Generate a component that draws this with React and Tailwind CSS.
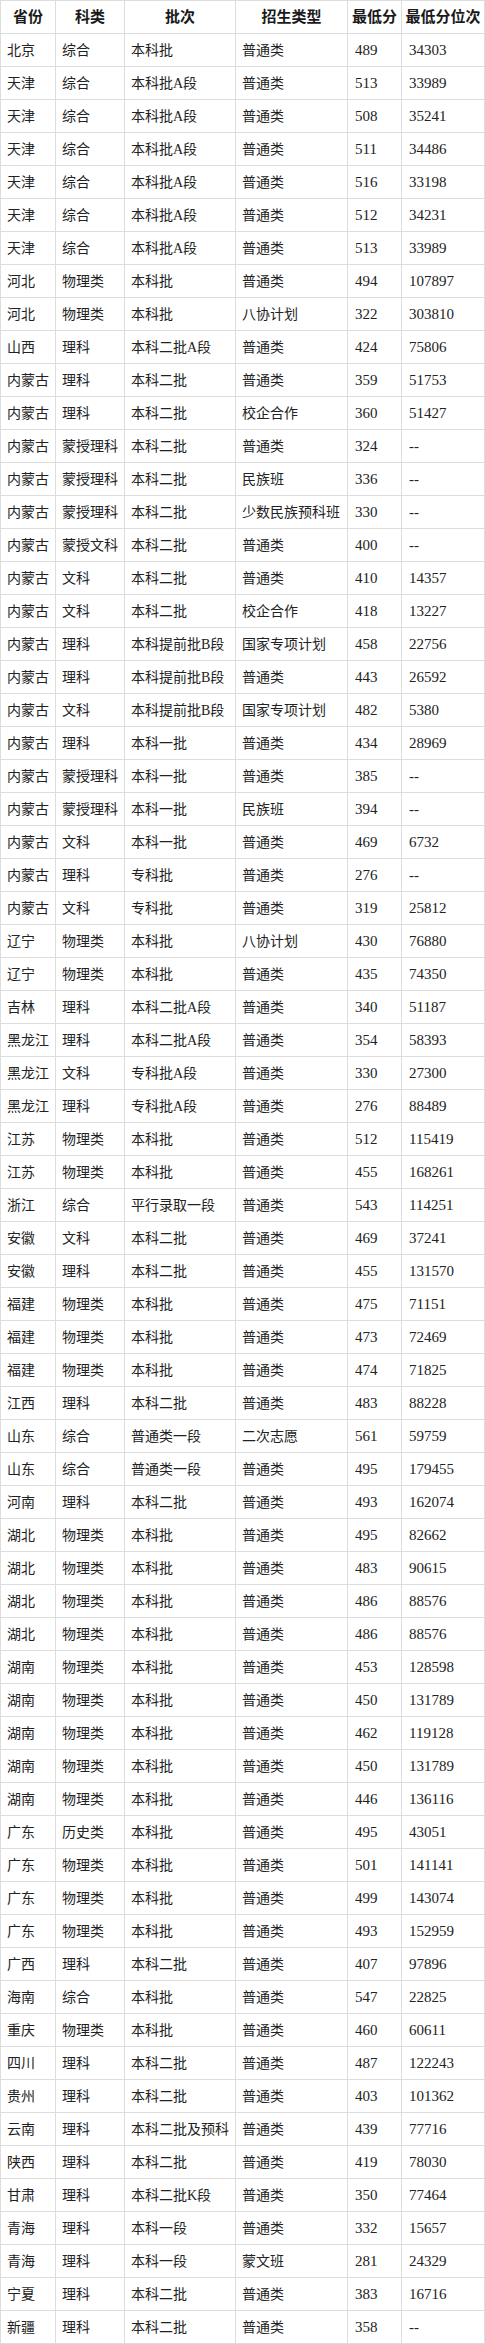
const headers = ["省份", "科类", "批次", "招生类型", "最低分", "最低分位次"];

const rows = [
  ["北京", "综合", "本科批", "普通类", "489", "34303"],
  ["天津", "综合", "本科批A段", "普通类", "513", "33989"],
  ["天津", "综合", "本科批A段", "普通类", "508", "35241"],
  ["天津", "综合", "本科批A段", "普通类", "511", "34486"],
  ["天津", "综合", "本科批A段", "普通类", "516", "33198"],
  ["天津", "综合", "本科批A段", "普通类", "512", "34231"],
  ["天津", "综合", "本科批A段", "普通类", "513", "33989"],
  ["河北", "物理类", "本科批", "普通类", "494", "107897"],
  ["河北", "物理类", "本科批", "八协计划", "322", "303810"],
  ["山西", "理科", "本科二批A段", "普通类", "424", "75806"],
  ["内蒙古", "理科", "本科二批", "普通类", "359", "51753"],
  ["内蒙古", "理科", "本科二批", "校企合作", "360", "51427"],
  ["内蒙古", "蒙授理科", "本科二批", "普通类", "324", "--"],
  ["内蒙古", "蒙授理科", "本科二批", "民族班", "336", "--"],
  ["内蒙古", "蒙授理科", "本科二批", "少数民族预科班", "330", "--"],
  ["内蒙古", "蒙授文科", "本科二批", "普通类", "400", "--"],
  ["内蒙古", "文科", "本科二批", "普通类", "410", "14357"],
  ["内蒙古", "文科", "本科二批", "校企合作", "418", "13227"],
  ["内蒙古", "理科", "本科提前批B段", "国家专项计划", "458", "22756"],
  ["内蒙古", "理科", "本科提前批B段", "普通类", "443", "26592"],
  ["内蒙古", "文科", "本科提前批B段", "国家专项计划", "482", "5380"],
  ["内蒙古", "理科", "本科一批", "普通类", "434", "28969"],
  ["内蒙古", "蒙授理科", "本科一批", "普通类", "385", "--"],
  ["内蒙古", "蒙授理科", "本科一批", "民族班", "394", "--"],
  ["内蒙古", "文科", "本科一批", "普通类", "469", "6732"],
  ["内蒙古", "理科", "专科批", "普通类", "276", "--"],
  ["内蒙古", "文科", "专科批", "普通类", "319", "25812"],
  ["辽宁", "物理类", "本科批", "八协计划", "430", "76880"],
  ["辽宁", "物理类", "本科批", "普通类", "435", "74350"],
  ["吉林", "理科", "本科二批A段", "普通类", "340", "51187"],
  ["黑龙江", "理科", "本科二批A段", "普通类", "354", "58393"],
  ["黑龙江", "文科", "专科批A段", "普通类", "330", "27300"],
  ["黑龙江", "理科", "专科批A段", "普通类", "276", "88489"],
  ["江苏", "物理类", "本科批", "普通类", "512", "115419"],
  ["江苏", "物理类", "本科批", "普通类", "455", "168261"],
  ["浙江", "综合", "平行录取一段", "普通类", "543", "114251"],
  ["安徽", "文科", "本科二批", "普通类", "469", "37241"],
  ["安徽", "理科", "本科二批", "普通类", "455", "131570"],
  ["福建", "物理类", "本科批", "普通类", "475", "71151"],
  ["福建", "物理类", "本科批", "普通类", "473", "72469"],
  ["福建", "物理类", "本科批", "普通类", "474", "71825"],
  ["江西", "理科", "本科二批", "普通类", "483", "88228"],
  ["山东", "综合", "普通类一段", "二次志愿", "561", "59759"],
  ["山东", "综合", "普通类一段", "普通类", "495", "179455"],
  ["河南", "理科", "本科二批", "普通类", "493", "162074"],
  ["湖北", "物理类", "本科批", "普通类", "495", "82662"],
  ["湖北", "物理类", "本科批", "普通类", "483", "90615"],
  ["湖北", "物理类", "本科批", "普通类", "486", "88576"],
  ["湖北", "物理类", "本科批", "普通类", "486", "88576"],
  ["湖南", "物理类", "本科批", "普通类", "453", "128598"],
  ["湖南", "物理类", "本科批", "普通类", "450", "131789"],
  ["湖南", "物理类", "本科批", "普通类", "462", "119128"],
  ["湖南", "物理类", "本科批", "普通类", "450", "131789"],
  ["湖南", "物理类", "本科批", "普通类", "446", "136116"],
  ["广东", "历史类", "本科批", "普通类", "495", "43051"],
  ["广东", "物理类", "本科批", "普通类", "501", "141141"],
  ["广东", "物理类", "本科批", "普通类", "499", "143074"],
  ["广东", "物理类", "本科批", "普通类", "493", "152959"],
  ["广西", "理科", "本科二批", "普通类", "407", "97896"],
  ["海南", "综合", "本科批", "普通类", "547", "22825"],
  ["重庆", "物理类", "本科批", "普通类", "460", "60611"],
  ["四川", "理科", "本科二批", "普通类", "487", "122243"],
  ["贵州", "理科", "本科二批", "普通类", "403", "101362"],
  ["云南", "理科", "本科二批及预科", "普通类", "439", "77716"],
  ["陕西", "理科", "本科二批", "普通类", "419", "78030"],
  ["甘肃", "理科", "本科二批K段", "普通类", "350", "77464"],
  ["青海", "理科", "本科一段", "普通类", "332", "15657"],
  ["青海", "理科", "本科一段", "蒙文班", "281", "24329"],
  ["宁夏", "理科", "本科二批", "普通类", "383", "16716"],
  ["新疆", "理科", "本科二批", "普通类", "358", "--"],
];

export default function App() {
  return (
    <div
      className="w-[485px] bg-white"
      style={{ fontFamily: '"Liberation Serif", "Noto Sans CJK SC", serif' }}
    >
      <div className="grid grid-cols-[55px_69px_111px_112px_54px_83px] border-l border-t border-[#dddddd]">
        {headers.map((h) => (
          <div
            key={h}
            className="h-[33px] flex items-center justify-center border-r border-b border-[#dddddd] text-[15px] font-bold text-[#1a1a1a] whitespace-nowrap"
          >
            {h}
          </div>
        ))}
        {rows.map((row, i) =>
          row.map((cell, j) => (
            <div
              key={i + "-" + j}
              className={
                "h-[33px] flex items-center pl-[6px] border-r border-b border-[#dddddd] text-[#222] whitespace-nowrap overflow-hidden " +
                (j >= 4 ? "text-[15px] pl-[7px]" : "text-[14px]")
              }
            >
              {cell}
            </div>
          ))
        )}
      </div>
    </div>
  );
}
